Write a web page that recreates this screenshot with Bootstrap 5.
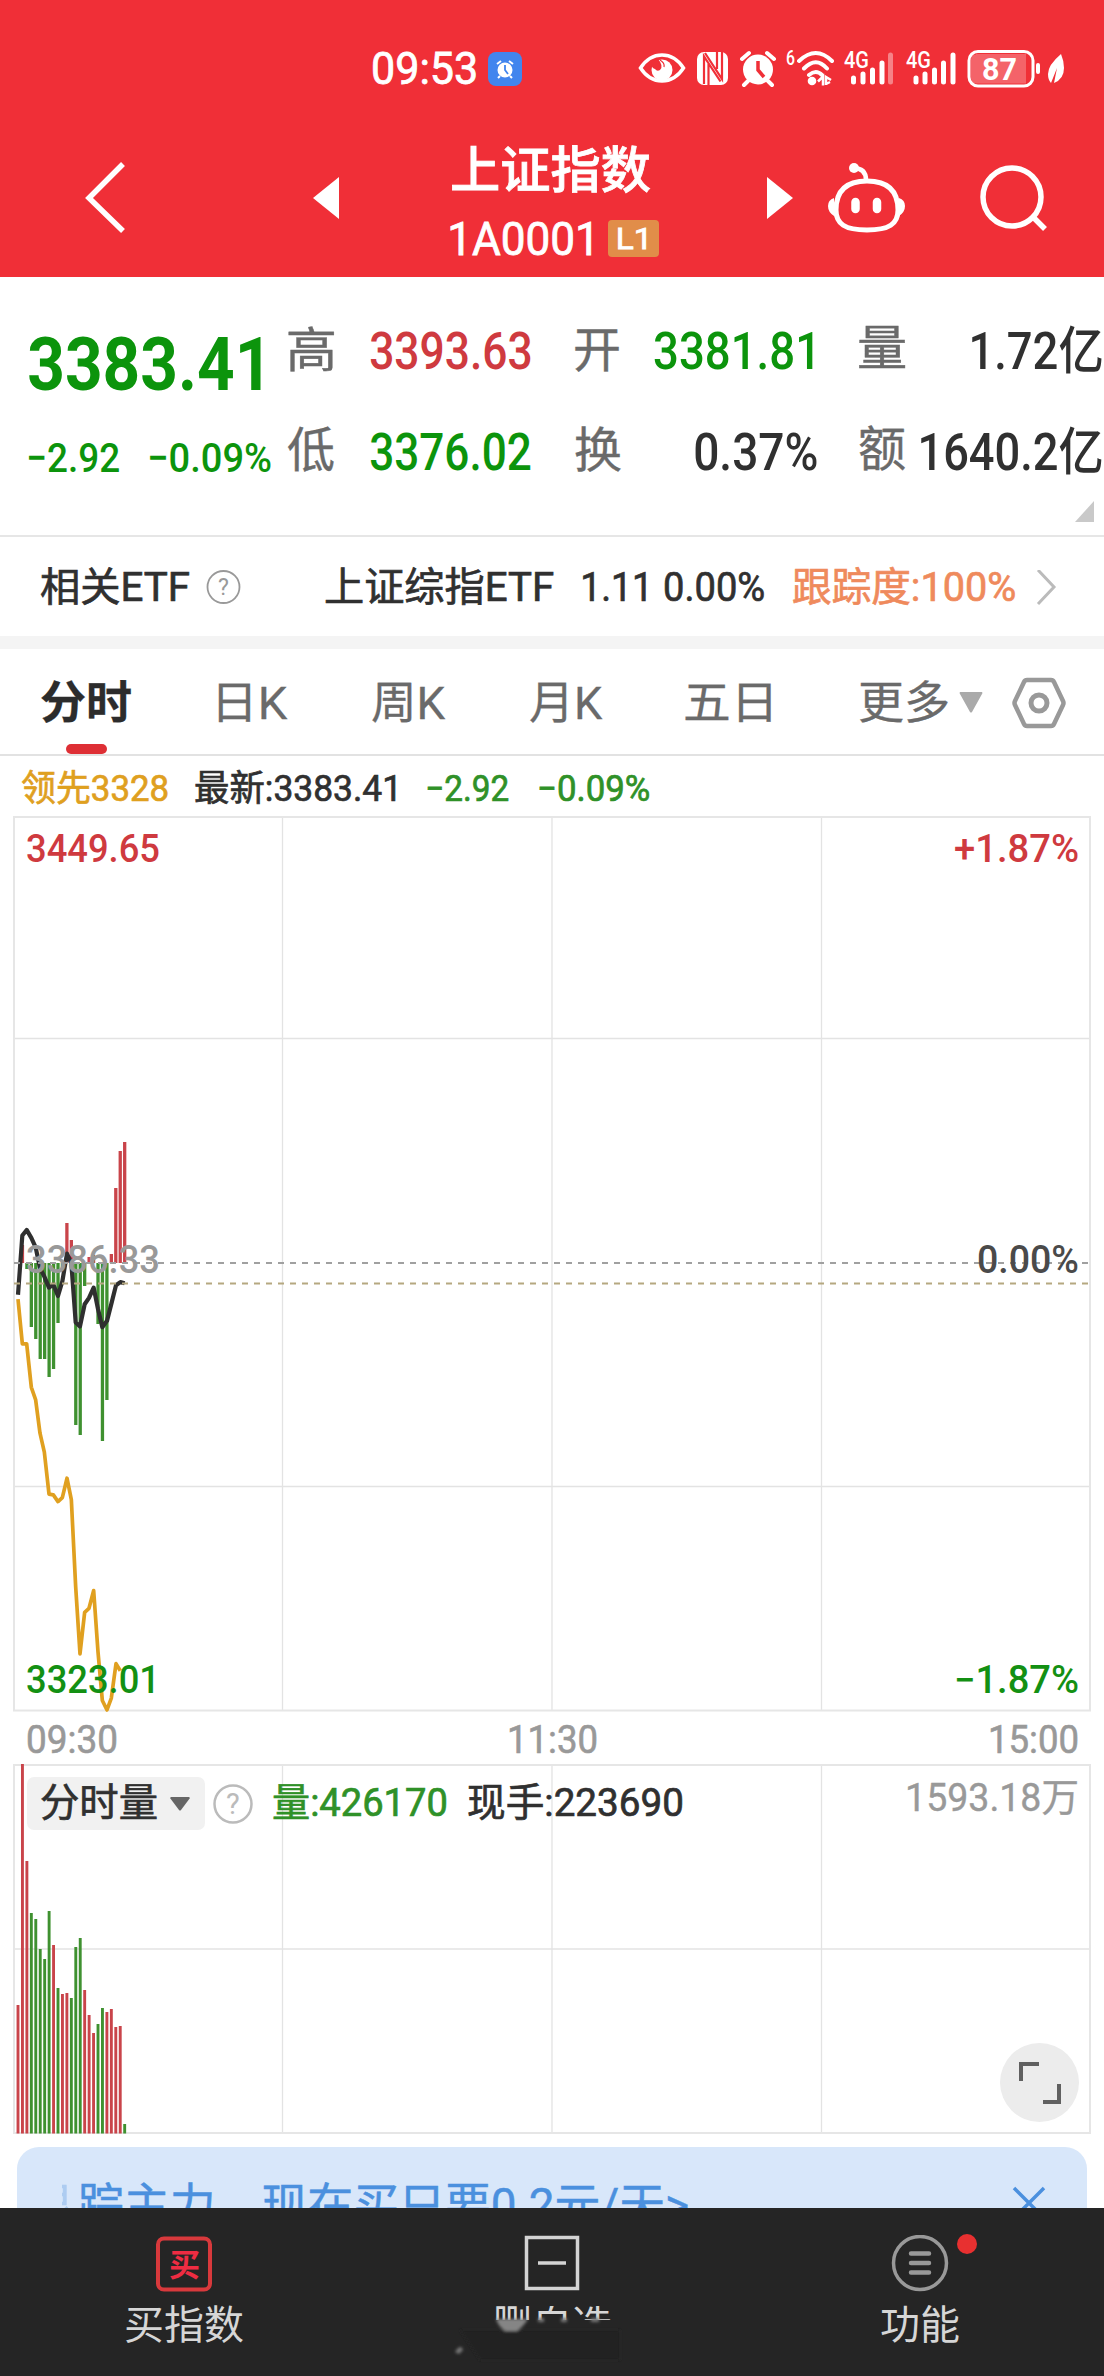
<!DOCTYPE html>
<html lang="zh-CN">
<head>
<meta charset="utf-8">
<meta name="viewport" content="width=device-width, initial-scale=1">
<title>上证指数 1A0001</title>
<link rel="stylesheet" href="https://cdn.jsdelivr.net/npm/bootstrap@5.3.0/dist/css/bootstrap.min.css">
<style>
:root{--up:#cf3a3f;--down:#0c940c;--ink:#303030;--soft:#6a6a6a;--pale:#999}
html,body{overflow:hidden}
body{width:1104px;height:2376px;margin:0;background:#fff;color:var(--ink);font-family:Roboto,"Noto Sans CJK SC",sans-serif;line-height:1}
svg{display:block;flex:none}
.fit{display:inline-block;white-space:nowrap;line-height:1;transform-origin:0 50%;width:0}
.lane{display:grid;align-items:center;justify-items:start}
.lane>*{min-width:0}
.up{color:var(--up)}.down{color:var(--down)}.soft{color:var(--soft)}
.topbar{background:#f02f37;height:277px;color:#fff}
.status{height:106px;padding-top:31px;grid-template-columns:373px 115px 142px 1fr;font-size:45px}
.status .fit,.code-line .fit{-webkit-text-stroke:.8px}
.titlebar{height:171px;grid-template-columns:85px 228px 137px 317px 61px 152px 1fr;padding-top:12px}
.titlebar .names{height:150px}
.name-cn{font-size:50px;font-weight:500;height:50px;padding-left:2px;margin-top:23px;-webkit-text-stroke:.8px}
.code-line{font-size:47px;margin-top:18px;height:50px;grid-template-columns:158px 51px}
.level{background:#e18d49;border-radius:4px;width:51px;height:37px;font-size:30px;padding-left:10px;display:flex;align-items:center}
.quote{height:260px;border-bottom:2px solid #e6e6e6;position:relative}
.quote .lane{grid-template-columns:29px 121px 138px 82px 205px 79px 205px 1fr}
.q1{height:56px}
.q-wrap{padding-top:36px}
.q2{height:56px;margin-top:54px}
.amount{display:block}
.amount-a{width:132px}
.amount-b{padding-left:41px}
.amount-c{width:183px}
.big{font-size:75px;font-weight:700;position:relative;top:14px}
.num{font-size:51px;font-weight:500;position:relative;top:1px}
.lab{font-size:48px;color:var(--soft);-webkit-text-stroke:.4px}
.sub{font-size:41px;font-weight:500;position:relative;top:7px}
.fold{position:absolute;right:10px;bottom:13px;width:19px;height:21px;background:#c9c9c9;clip-path:polygon(100% 0,100% 100%,0 100%)}
.etf{height:99px;grid-template-columns:41px 165px 120px 257px 82px 128px 243px 1fr;font-size:40px;padding-top:3px;-webkit-text-stroke:.7px}
.track{color:#ef8a5c}
.band{height:13px;background:#f4f4f4}
.tabs{height:107px;border-bottom:2px solid #e2e2e2;position:relative;grid-template-columns:41px 177px 154px 158px 155px 175px 99px 53px 1fr;font-size:45px;color:var(--soft);padding-top:4px;-webkit-text-stroke:.3px}
.tabs svg{margin-top:-2px}
.tabs .active{color:#2c2c2c;font-weight:700}
.tabs::after{content:"";position:absolute;left:66px;bottom:0;width:41px;height:10px;border-radius:5px;background:#de2f35}
.legend-row{height:60px;grid-template-columns:22px 173px 232px 112px 1fr;font-size:36px;padding-top:5px;-webkit-text-stroke:.7px}
.legend-row .down{color:#2f9128}
.lead-price{color:#dfa01f}
svg text{font-family:Roboto,"Noto Sans CJK SC",sans-serif}
.volume{height:370px;position:relative}
.vol-head{position:absolute;left:27px;top:13px;height:53px;width:1077px;grid-template-columns:14px 129px 43px 60px 195px 440px 1fr;font-size:39px;-webkit-text-stroke:.7px}
.vol-head>*{grid-row:1}
.vol-head .bgbox{grid-column:1/3;width:178px;height:53px;background:#f1f1f1;border-radius:7px}
.vh-a{grid-column:2}.vh-b{grid-column:3}.vh-c{grid-column:4}.vh-d{grid-column:5;color:#2f9128}.vh-e{grid-column:6}
.vh-f{grid-column:7;margin-bottom:11px;color:#999;-webkit-text-stroke:.4px}
.zoomer{position:absolute;left:1000px;top:279px}
.promo{margin:13px 17px 0;height:61px;background:#d8e7fa;border-radius:22px 22px 0 0;overflow:hidden;color:#4b90de;font-size:46px;padding-top:35px;grid-template-columns:62px 1fr 75px;align-items:start;-webkit-text-stroke:.5px}
.clipfade{display:block;width:9px;height:30px;margin-right:8px;overflow:hidden;opacity:.3}
.clipfade span{display:block;width:46px;margin-left:-37px}
.dock{height:168px;background:#252525;color:#d6d6d6;font-size:40px;position:relative}
.dock .item{height:168px;padding-top:27px}
.dock .cap{height:40px;margin-top:13px}
.dock .cutoff{height:14px;overflow:hidden}
.smudge{position:absolute;left:440px;top:98px}
.reddot{position:absolute;left:66px;top:-1px;width:20px;height:20px;background:#e83030}
</style>
<script src="https://cdn.jsdelivr.net/npm/bootstrap@5.3.0/dist/js/bootstrap.bundle.min.js"></script>
</head>
<body>
<header class="topbar">
  <div class="status lane">
    <span></span>
    <span class="fit" data-w="103">09:53</span>
    <svg width="34" height="34" viewBox="0 0 34 34"><rect width="34" height="34" rx="8" fill="#4285ee"/><circle cx="17" cy="18" r="7.500" fill="#fff"/><path d="M9 12l4-3M25 12l-4-3M12 24l-2 2M22 24l2 2" stroke="#fff" stroke-width="2"/><path d="M17 13v5l3 4" stroke="#4285ee" stroke-width="1.800" fill="none"/></svg>
    <svg width="450" height="44" viewBox="629 46 450 44" fill="none" stroke="#fff">
      <path d="M639.500 67Q648 54 661 54T682.500 67Q674 80 661 80T639.500 67Z" stroke-width="3.500"/>
      <circle cx="661" cy="69" r="10.500" fill="#fff" stroke="none"/><path d="M650 60l7-2q6 7 2 11q-3 2-5-1q-4-1-4-8Z" fill="#f02f37" stroke="none"/><path d="M659 59q5 3 4 7" stroke="#f02f37" stroke-width="1.200"/>
      <rect x="696" y="51" width="31" height="33" rx="7" fill="#fff" stroke="none"/>
      <path d="M703 83V55.500l16.500 25M704 52l17 26V51M707.500 63v21M716 51v17" stroke="#f02f37" stroke-width="2.200"/>
      <circle cx="757" cy="68.500" r="15" fill="#fff" stroke="none"/>
      <path d="M741 58l7-6M773 58l-7-6M747 80l-4 4M767 80l4 4" stroke-width="4" stroke-linecap="round"/><path d="M757 60v9l6 7" stroke="#f02f37" stroke-width="3.500"/>
      <path d="M798 60Q815 44 831 60M803 67.500Q815 55 826 67.500M808 74Q815 68 821 74" stroke-width="4" stroke-linecap="round"/><circle cx="811" cy="80" r="4.300" fill="#fff" stroke="none"/>
      <path d="M817 80.500l5-5v9M825 84v-8l5 3M825 83l4-2" stroke-width="2.500"/>
      <g stroke-width="5" stroke-linecap="round"><path d="M852.500 77v4M862 73v8M871.500 69v12M881 62v19"/><path d="M889.500 54v27" opacity=".4"/><path d="M915 77v4M924 73v8M933.500 69v12M942.500 62v19M952 54v27"/></g>
      <g fill="#fff" stroke="none" font-weight="500"><text x="785" y="64" font-size="20" textLength="9" lengthAdjust="spacingAndGlyphs">6</text><text x="843" y="67" font-size="23" textLength="25" lengthAdjust="spacingAndGlyphs">4G</text><text x="905" y="67" font-size="23" textLength="25" lengthAdjust="spacingAndGlyphs">4G</text></g>
      <rect x="968" y="50.500" width="64" height="34.500" rx="9" stroke-width="3"/><path d="M975 53h50v29.500h-50q-5 0-5-5v-19q0-5 5-5Z" fill="#fff" opacity=".25" stroke="none"/>
      <text x="981" y="79" font-size="32" font-weight="700" fill="#fff" stroke="none" textLength="35" lengthAdjust="spacingAndGlyphs">87</text>
      <path d="M1037 64v7" stroke-width="4" stroke-linecap="round"/>
      <path d="M1060 53q-13 11-13 20q0 6 3 9l6-15l-3 15q10-4 10-15q0-7-3-14Z" fill="#fff" stroke="none"/>
    </svg>
  </div>
  <div class="titlebar lane">
    <span></span>
    <svg width="42" height="72" viewBox="0 0 42 72"><path d="M38 2L4 36l34 33" fill="none" stroke="#fff" stroke-width="5.500"/></svg>
    <svg width="26" height="42" viewBox="0 0 26 42"><path d="M26 0v42L0 21Z" fill="#fff"/></svg>
    <div class="names">
      <div class="name-cn"><span class="fit" data-w="198">上证指数</span></div>
      <div class="code-line lane"><span class="fit" data-w="141">1A0001</span><span class="level"><span class="fit" data-w="28">L1</span></span></div>
    </div>
    <svg width="26" height="42" viewBox="0 0 26 42"><path d="M0 0v42L26 21Z" fill="#fff"/></svg>
    <svg width="78" height="70" viewBox="827 163 78 70" fill="none" stroke="#fff"><path d="M866 181c-23 0-31 12-31 29c0 14 9 20 31 20s31-6 31-20c0-17-8-29-31-29Z" stroke-width="5"/><path d="M852 168q13 0 13 12" stroke-width="4.500"/><circle cx="853" cy="168" r="5" fill="#fff" stroke="none"/><path d="M833 198q-6 2-6 8t6 10ZM898 198q6 2 6 8t-6 10Z" fill="#fff" stroke="none"/><path d="M854.500 202v7M876 202v7" stroke-width="8.500" stroke-linecap="round"/></svg>
    <svg width="70" height="70" viewBox="979 163 70 70" fill="none" stroke="#fff" stroke-width="5.500"><circle cx="1011" cy="197" r="29"/><path d="M1032 217l12 12"/></svg>
  </div>
</header>

<section class="quote">
  <div class="q-wrap">
    <div class="q1 lane">
      <span></span><span class="fit big down" data-w="232">3383.41</span><span></span>
      <span class="fit lab" data-w="46">高</span><span class="fit num up" data-w="161">3393.63</span>
      <span class="fit lab" data-w="44">开</span><span class="fit num down" data-w="159">3381.81</span>
      <span class="d-flex w-100 justify-content-between"><span class="fit lab" data-w="46">量</span><span class="amount amount-a"><span class="fit num" data-w="130">1.72亿</span></span></span>
    </div>
    <div class="q2 lane">
      <span></span><span class="fit sub down" data-w="90">−2.92</span><span class="fit sub down" data-w="121">−0.09%</span>
      <span class="fit lab" data-w="46">低</span><span class="fit num down" data-w="161">3376.02</span>
      <span class="fit lab" data-w="46">换</span><span class="amount-b"><span class="fit num" data-w="122">0.37%</span></span>
      <span class="d-flex w-100 justify-content-between"><span class="fit lab" data-w="46">额</span><span class="amount amount-c"><span class="fit num" data-w="181">1640.2亿</span></span></span>
    </div>
  </div>
  <i class="fold"></i>
</section>

<section class="etf lane">
  <span></span><span class="fit" data-w="148">相关ETF</span>
  <svg width="36" height="36" viewBox="0 0 36 36"><circle cx="17.500" cy="17" r="16" fill="none" stroke="#999" stroke-width="1.800"/><text x="12" y="25" font-size="23" fill="#999" stroke="none">?</text></svg>
  <span class="fit" data-w="227">上证综指ETF</span><span class="fit" data-w="63">1.11</span><span class="fit" data-w="99">0.00%</span>
  <span class="fit track" data-w="222">跟踪度:100%</span>
  <svg width="22" height="36" viewBox="0 0 22 36"><path d="M2 0l16 17L2 34" fill="none" stroke="#bbb" stroke-width="3"/></svg>
</section>
<div class="band"></div>
<nav class="tabs lane">
  <span></span><span class="fit active" data-w="90">分时</span><span class="fit" data-w="70">日K</span><span class="fit" data-w="74">周K</span><span class="fit" data-w="73">月K</span><span class="fit" data-w="86">五日</span><span class="fit" data-w="88">更多</span>
  <svg width="24" height="21" viewBox="0 0 24 21"><path d="M1 0h22q1 1 0 2L13 20q-1 1-2 0L1 2q-1-1 0-2Z" fill="#aaa"/></svg>
  <svg width="54" height="52" viewBox="0 0 54 52" fill="none" stroke="#999"><path d="M15 3h24q2 0 3 2l9 19q1 2 0 4l-9 19q-1 2-3 2H15q-2 0-3-2L3 28q-1-2 0-4l9-19q1-2 3-2Z" stroke-width="4.500"/><circle cx="27" cy="26" r="8" stroke-width="5"/></svg>
</nav>
<section class="legend-row lane">
  <span></span><span class="fit lead-price" data-w="146">领先3328</span><span class="fit" data-w="200">最新:3383.41</span><span class="fit down" data-w="81">−2.92</span><span class="fit down" data-w="110">−0.09%</span>
</section>

<svg class="price" width="1104" height="948" viewBox="0 816 1104 948">
  <path d="M14 1038.500H1090M14 1486.500H1090M282.500 816V1711M552 816V1711M821.500 816V1711" stroke="#e3e3e3" stroke-width="1.300"/>
  <rect x="14" y="817" width="1076" height="893.500" fill="none" stroke="#e6e6e6" stroke-width="2"/>
  <g id="diffBars" stroke-width="3.300"></g>
  <g transform="translate(0 1120) scale(.33333 .39541)" fill="none" stroke-linejoin="round">
    <path vector-effect="non-scaling-stroke" stroke="#e0a020" stroke-width="3.700" d="M54 453L67 566H80L94 676L107 708L120 792L133 840L147 946L160 948L174 965L187 955L201 906L214 960L227 1180L240 1350L254 1245L267 1235L281 1190L294 1345L307 1468L321 1492L334 1462L348 1375L361 1393"/>
    <path vector-effect="non-scaling-stroke" stroke="#2f2f2f" stroke-width="4.200" d="M54 442L67 292L80 278L94 298L107 322L120 375L133 396L147 424L160 416L174 445L187 408L201 338L214 362L227 512L240 522L254 466L267 450L281 424L294 478L307 524L321 508L334 465L348 418L361 410L374 413"/>
  </g>
  <path d="M14 1263H1088" stroke="#a0a0a0" stroke-width="2" stroke-dasharray="6 6"/>
  <path d="M14 1283.500H1088" stroke="#b5a880" stroke-width="2" stroke-dasharray="6 6"/>
  <g font-size="38" font-weight="500">
    <text x="26" y="862" fill="#cf3a3f" textLength="134" lengthAdjust="spacingAndGlyphs">3449.65</text>
    <text x="954" y="862" fill="#cf3a3f" textLength="125" lengthAdjust="spacingAndGlyphs">+1.87%</text>
    <text x="26" y="1273" fill="#999" textLength="134" lengthAdjust="spacingAndGlyphs">3386.33</text>
    <text x="977" y="1273" fill="#4a4a4a" textLength="102" lengthAdjust="spacingAndGlyphs">0.00%</text>
    <text x="26" y="1693" fill="#139013" textLength="134" lengthAdjust="spacingAndGlyphs">3323.01</text>
    <text x="954" y="1693" fill="#139013" textLength="125" lengthAdjust="spacingAndGlyphs">−1.87%</text>
    <g fill="#999" stroke="#999" stroke-width=".6" font-weight="400"><text x="26" y="1753" textLength="92" lengthAdjust="spacingAndGlyphs">09:30</text><text x="507" y="1753" textLength="91" lengthAdjust="spacingAndGlyphs">11:30</text><text x="988" y="1753" textLength="91" lengthAdjust="spacingAndGlyphs">15:00</text></g>
  </g>
</svg>

<section class="volume">
  <svg width="1104" height="370" viewBox="0 1764 1104 370">
    <path d="M14 1949H1090M282.500 1764V2133M552 1764V2133M821.500 1764V2133" stroke="#e3e3e3" stroke-width="1.300"/>
    <rect x="14" y="1765" width="1076" height="368" fill="none" stroke="#e6e6e6" stroke-width="2"/>
    <g id="volBars" stroke-width="2.900"></g>
  </svg>
  <div class="vol-head lane">
    <span class="bgbox"></span>
    <span class="fit vh-a" data-w="116">分时量</span>
    <svg class="vh-b" width="20" height="14" viewBox="0 0 20 14"><path d="M1 0h18l1 1-9 12q-1 1-2 0L0 1Z" fill="#666"/></svg>
    <svg class="vh-c" width="40" height="40" viewBox="0 0 40 40"><circle cx="20" cy="20" r="18.500" fill="none" stroke="#bbb" stroke-width="2.500"/><text x="13" y="30" font-size="29" fill="#bbb">?</text></svg>
    <span class="fit vh-d" data-w="173">量:426170</span>
    <span class="fit vh-e" data-w="214">现手:223690</span>
    <span class="fit vh-f" data-w="169">1593.18万</span>
  </div>
  <svg class="zoomer" width="79" height="79" viewBox="0 0 79 79"><circle cx="39.500" cy="39.500" r="39.500" fill="#ececec"/><path d="M21 38V21h18M43 59h16V41" fill="none" stroke="#606060" stroke-width="4"/></svg>
</section>

<section class="promo lane">
  <span class="d-flex w-100 justify-content-end"><span class="clipfade"><span>跟</span></span></span>
  <span><span class="fit" data-w="609">踪主力，现在买只要0.2元/天&gt;</span></span>
  <svg width="34" height="34" viewBox="0 0 34 34"><path d="M2 6l30 30M32 6L2 36" stroke="#4b90de" stroke-width="3.500"/></svg>
</section>

<footer class="dock">
  <div class="row g-0">
    <div class="col-4 item d-flex flex-column align-items-center">
      <svg width="58" height="58" viewBox="0 0 58 58"><rect x="3" y="3.500" width="52" height="51" rx="6" fill="none" stroke="#d8393c" stroke-width="4"/><text x="14" y="41" font-size="31" font-weight="700" fill="#ee2c42">买</text></svg>
      <div class="cap">买指数</div>
    </div>
    <div class="col-4 item d-flex flex-column align-items-center">
      <svg width="56" height="58" viewBox="0 0 56 58" fill="none" stroke="#d4d4d4" stroke-width="3.500"><rect x="2.500" y="2.500" width="51" height="51"/><path d="M14 28h28"/></svg>
      <div class="cap cutoff">删自选</div>
    </div>
    <div class="col-4 item d-flex flex-column align-items-center">
      <div class="position-relative"><svg width="58" height="58" viewBox="0 0 58 58" fill="none" stroke="#999"><circle cx="29" cy="28" r="26.500" stroke-width="3.500"/><path d="M20 18.500h18M20 28h18M20 37.500h18" stroke-width="4.500" stroke-linecap="round"/></svg>
      <i class="rounded-circle reddot"></i></div>
      <div class="cap">功能</div>
    </div>
  </div>
  <svg class="smudge" width="220" height="60" viewBox="0 0 220 60"><defs><filter id="soft"><feGaussianBlur stdDeviation="1.600"/></filter></defs><g filter="url(#soft)"><path d="M20 24h160v30H40Z" fill="#232323"/><path d="M56 13h32q-5 8-11 12h-12q-7-5-9-12Z" fill="#858585"/><path d="M98 14h6M121 14h6M151 14h8" stroke="#777" stroke-width="4"/><path d="M15 46q6-9 8-2l-4 4Z" fill="#777"/></g></svg>
</footer>

<script>
// Condense each label to its column: data-w is the inked width in pixels
const ctx = document.createElement('canvas').getContext('2d');
document.querySelectorAll('.fit').forEach(el => {
  const cs = getComputedStyle(el);
  ctx.font = `${cs.fontWeight} ${cs.fontSize} ${cs.fontFamily}`;
  const m = ctx.measureText(el.textContent);
  const s = el.dataset.w / (m.actualBoundingBoxRight + m.actualBoundingBoxLeft);
  el.style.transform = `translateX(${m.actualBoundingBoxLeft * s}px) scaleX(${s})`;
});
const UP = '#c9444a', DOWN = '#3f9130';
const line = (x, y1, y2, c) => `<path d="M${x} ${y1}V${y2}" stroke="${c}"/>`;
// Minute index against end of the momentum bar, measured from the previous close
const diff = {1:1245,2:1269,3:1327,4:1339,5:1359,6:1359,7:1377,8:1369,9:1323,10:1268,11:1223,12:1240,13:1425,14:1435,15:1286,16:1257,17:1255,18:1324,19:1441,20:1400,21:1254,22:1188,23:1151,24:1142};
document.getElementById('diffBars').innerHTML = Object.entries(diff)
  .map(([i, y]) => line(18 + i * 4.445, 1263, y, y < 1263 ? UP : DOWN)).join('');
const vol = [[2005,1],[1764,1],[1861,1],[1913],[1919],[1949],[1959],[1911],[1945,1],[1988],[1994,1],[1993,1],[1998],[1947],[1938],[1990,1],[2015,1],[2033,1],[2024],[2008],[2012,1],[2009,1],[2027,1],[2026,1],[2124]];
document.getElementById('volBars').innerHTML = vol
  .map(([y, up], i) => line(18 + i * 4.445, 2133.5, y, up ? UP : DOWN)).join('');
</script>
</body>
</html>
